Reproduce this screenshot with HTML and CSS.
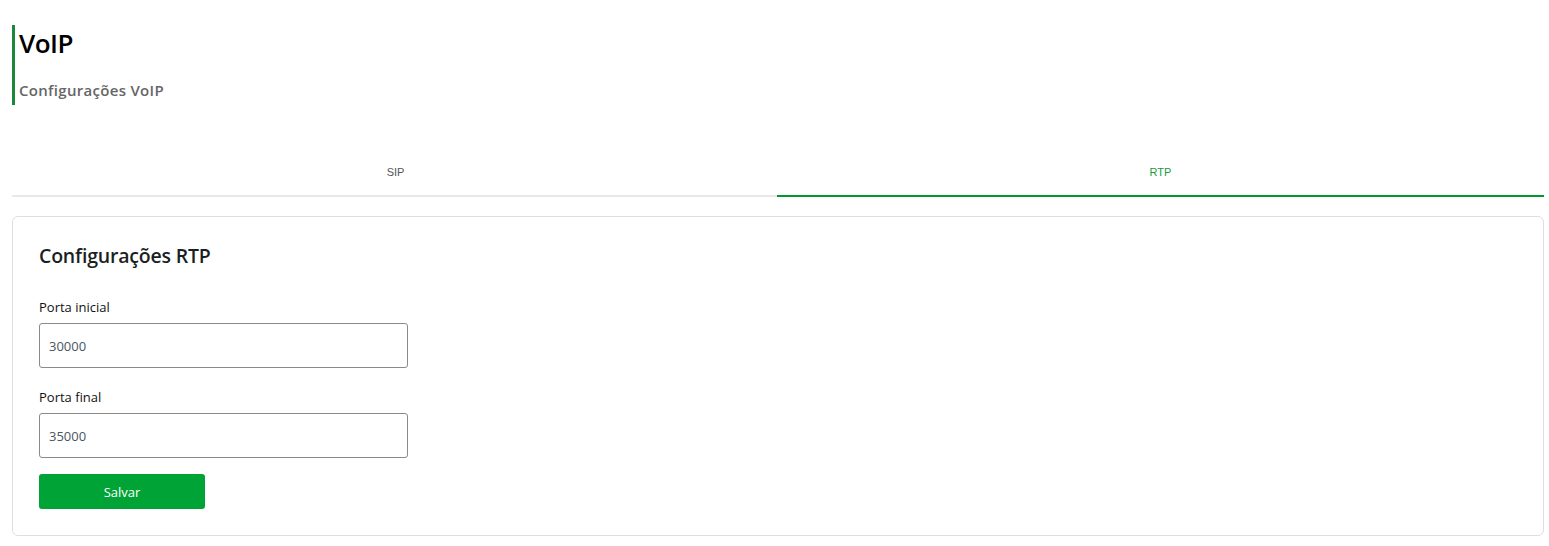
FILE: index.html
```html
<!DOCTYPE html>
<html lang="pt">
<head>
<meta charset="utf-8">
<title>VoIP</title>
<link rel="stylesheet" href="styles.css">
</head>
<body>
<div class="page">
  <header class="page-header">
    <h1 class="page-title">VoIP</h1>
    <p class="page-subtitle">Configurações VoIP</p>
  </header>
  <nav class="tabs">
    <div class="tab">SIP</div>
    <div class="tab tab-active">RTP</div>
  </nav>
  <section class="card">
    <h2 class="card-title">Configurações RTP</h2>
    <div class="field">
      <label class="field-label">Porta inicial</label>
      <input class="field-input" type="text" value="30000">
    </div>
    <div class="field field-last">
      <label class="field-label">Porta final</label>
      <input class="field-input" type="text" value="35000">
    </div>
    <button class="btn-save">Salvar</button>
  </section>
</div>
</body>
</html>
```
FILE: styles.css
```css
* { box-sizing: border-box; }
html, body { margin: 0; padding: 0; background: #fff; }
body { font-family: "Open Sans", "Noto Sans", sans-serif; color: #212529; }
.page { padding: 25px 5px 0 12px; }
.page-header {
  border-left: 3px solid #1a8a3a;
  padding: 2px 0 0 4px;
  height: 80px;
  display: flex;
  flex-direction: column;
}
.page-title {
  margin: 0;
  font-size: 26px;
  font-weight: 600;
  line-height: 32px;
  color: #000;
  letter-spacing: -0.5px;
}
.page-subtitle {
  margin: 21px 0 0 0;
  font-size: 15px;
  font-weight: 600;
  line-height: 20px;
  color: #666;
  letter-spacing: 0.3px;
}
.tabs {
  display: flex;
  margin-top: 44px;
  border-bottom: 2px solid #e8e8e8;
}
.tab {
  flex: 1;
  text-align: center;
  font-family: "Liberation Sans", Arial, sans-serif;
  font-size: 11px;
  color: #555;
  height: 48px;
  line-height: 46px;
  margin-bottom: -2px;
  border-bottom: 2px solid transparent;
}
.tab:first-child { margin-right: -2px; }
.tab-active { color: #1a9a3c; border-bottom-color: #00992e; }
.card {
  margin-top: 19px;
  border: 1px solid #dedede;
  border-radius: 6px;
  padding: 26px;
  height: 320px;
}
.card-title {
  margin: 0 0 29px 0;
  font-size: 19.5px;
  font-weight: 600;
  line-height: 26px;
  color: #1b1f23;
  letter-spacing: -0.2px;
}
.field { margin-bottom: 20px; }
.field-last { margin-bottom: 16px; }
.field-label {
  display: block;
  font-size: 13px;
  line-height: 18px;
  margin-bottom: 7px;
  color: #111;
}
.field-input {
  display: block;
  width: 369px;
  height: 45px;
  border: 1px solid #8a8a8a;
  border-radius: 3px;
  padding: 0 9px;
  font-family: "Open Sans", sans-serif;
  font-size: 13px;
  color: #4a5560;
  outline: none;
}
.btn-save {
  display: block;
  width: 166px;
  height: 35px;
  border: none;
  border-radius: 3px;
  background: #00a335;
  color: #fff;
  font-family: "Open Sans", sans-serif;
  font-size: 13px;
}
```
